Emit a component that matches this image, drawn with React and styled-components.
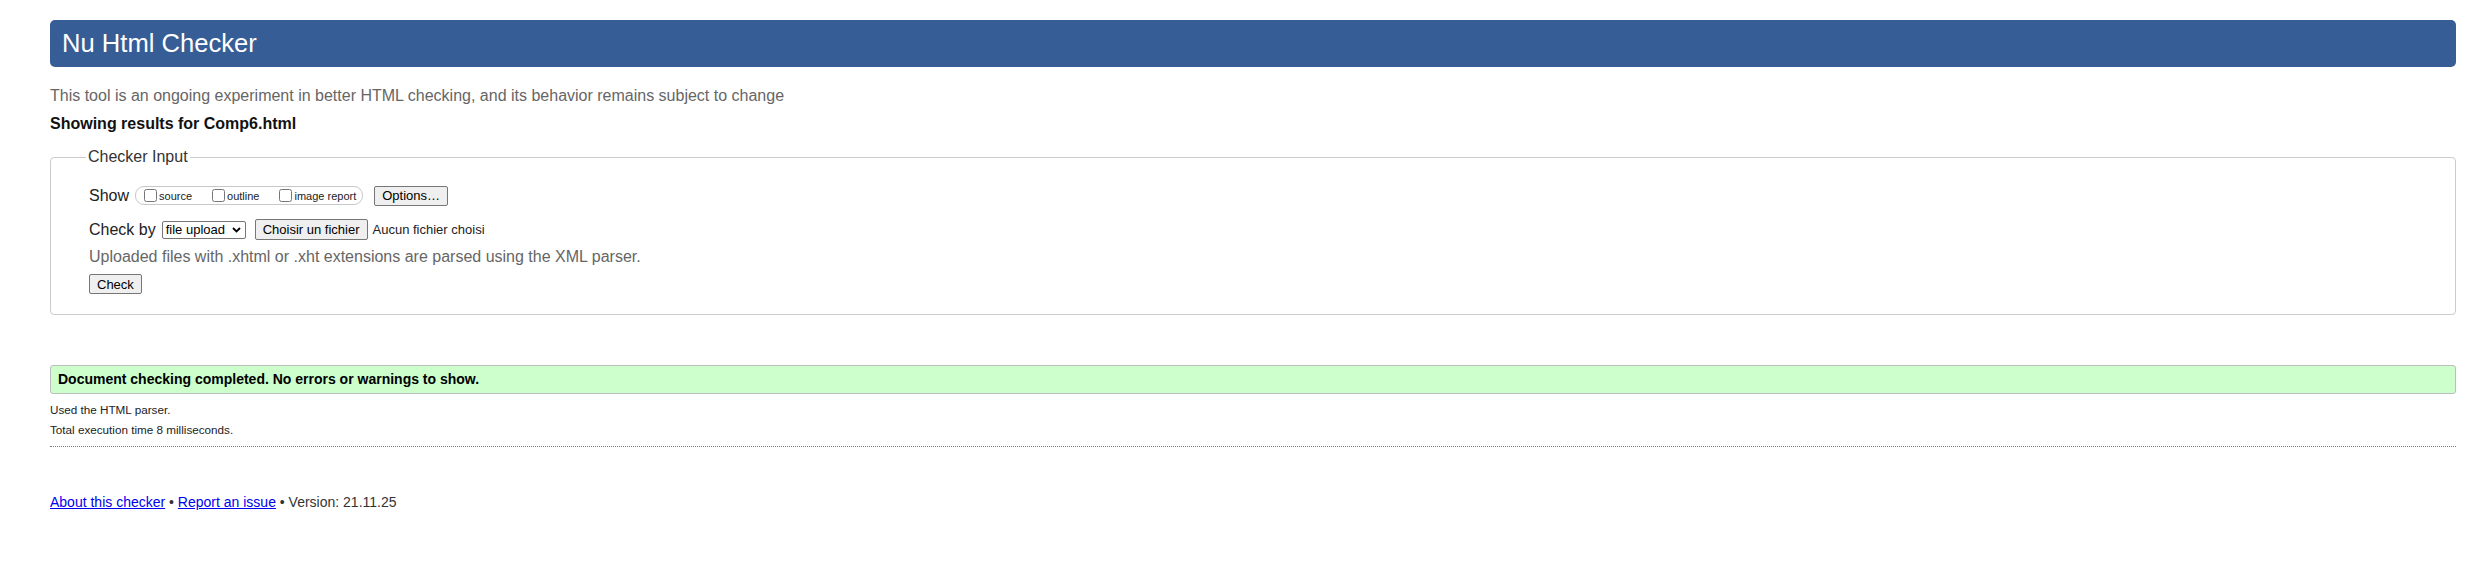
import styled, { createGlobalStyle } from "styled-components"

const GlobalStyle = createGlobalStyle`
  html, body {
    margin: 0;
    background: #fff;
  }
  body {
    padding: 20px 22px 0 50px;
    font-family: "Liberation Sans", Arial, sans-serif;
    color: #222;
  }
`

const Banner = styled.h1`
  margin: 0;
  height: 47px;
  line-height: 47px;
  padding: 0 12px;
  border-radius: 5px;
  background: #365d95;
  color: #fff;
  font-size: 25.6px;
  font-weight: normal;
`

const Intro = styled.p`
  margin: 19px 0 0;
  font-size: 16px;
  line-height: 19.2px;
  color: #666;
`

const ResultsFor = styled.p`
  margin: 9px 0 0;
  font-size: 16px;
  line-height: 19.2px;
  font-weight: bold;
  color: #111;
`

const InputFieldset = styled.fieldset`
  margin: 14px 0 0;
  padding: 19px 38px 20px 38px;
  border: 1px solid #cccccc;
  border-radius: 4px;
  min-width: 0;
`

const Legend = styled.legend`
  margin-left: -3px;
  padding: 0 2px;
  font-size: 16px;
  line-height: 19.2px;
  color: #333;
`

const FormRow = styled.div`
  display: flex;
  align-items: center;
  height: 20px;
  margin-top: ${props => props.$gap || 0}px;
`

const RowLabel = styled.span`
  font-size: 16px;
  color: #222;
`

const OptionGroup = styled.span`
  display: inline-flex;
  align-items: center;
  box-sizing: border-box;
  height: 19px;
  margin-left: 6px;
  padding: 0 6px 0 4px;
  border: 1px solid #c8c8c8;
  border-radius: 9px;
`

const OptionLabel = styled.label`
  display: inline-flex;
  align-items: center;
  font-size: 11px;
  color: #222;
  margin-right: 16px;
  &:last-child {
    margin-right: 0;
  }
`

const Checkbox = styled.input`
  width: 13px;
  height: 13px;
  margin: 0 2px 0 4px;
`

const Button = styled.button`
  box-sizing: border-box;
  height: ${props => props.$h || 20}px;
  margin-left: ${props => props.$ml || 0}px;
  padding: 0 7px;
  border: 1px solid #767676;
  border-radius: 2px;
  background: #efefef;
  color: #000;
  font-family: "Liberation Sans", Arial, sans-serif;
  font-size: 13px;
`

const SelectBox = styled.div`
  display: flex;
  align-items: center;
  justify-content: space-between;
  box-sizing: border-box;
  width: 84px;
  height: 18px;
  margin-left: 6px;
  padding: 0 4px 0 3px;
  border: 1px solid #767676;
  border-radius: 2px;
  font-size: 13px;
  color: #000;
`

const FileName = styled.span`
  margin-left: 5px;
  font-size: 13px;
  color: #222;
`

const Hint = styled.p`
  margin: 7.5px 0 0;
  font-size: 16px;
  line-height: 19.2px;
  color: #666;
`

const SuccessBox = styled.div`
  box-sizing: border-box;
  height: 29px;
  margin-top: 50px;
  padding: 0 7px;
  border: 1px solid #bdbdbd;
  border-radius: 3px;
  background: #ccffcc;
  font-size: 14px;
  line-height: 27px;
  font-weight: bold;
  color: #000;
`

const MetaList = styled.div`
  margin-top: 5.5px;
`

const Meta = styled.p`
  margin: 0;
  font-size: 11.7px;
  line-height: 20px;
  color: #222;
`

const Divider = styled.hr`
  margin: 6.5px 0 0;
  border: 0;
  border-top: 1px dotted #777;
  height: 0;
`

const Footer = styled.p`
  margin: 47px 0 0;
  font-size: 14px;
  line-height: 16.8px;
  color: #333;
`

const Link = styled.a`
  color: #0000ee;
  text-decoration: underline;
`

const Chevron = () => (
  <svg width="9" height="6" viewBox="0 0 9 6">
    <path d="M1 1 L4.5 4.5 L8 1" fill="none" stroke="#000" strokeWidth="1.8" />
  </svg>
)

const showOptions = ["source", "outline", "image report"]

const App = () => {
  return (<>
    <GlobalStyle />
    <Banner>Nu Html Checker</Banner>
    <Intro>This tool is an ongoing experiment in better HTML checking, and its behavior remains subject to change</Intro>
    <ResultsFor>Showing results for Comp6.html</ResultsFor>
    <InputFieldset>
      <Legend>Checker Input</Legend>
      <FormRow>
        <RowLabel>Show</RowLabel>
        <OptionGroup>
          {showOptions.map(name => (
            <OptionLabel key={name}>
              <Checkbox type="checkbox" />
              {name}
            </OptionLabel>
          ))}
        </OptionGroup>
        <Button $ml={11}>Options…</Button>
      </FormRow>
      <FormRow $gap={14}>
        <RowLabel>Check by</RowLabel>
        <SelectBox>
          <span>file upload</span>
          <Chevron />
        </SelectBox>
        <Button $h={21} $ml={9}>Choisir un fichier</Button>
        <FileName>Aucun fichier choisi</FileName>
      </FormRow>
      <Hint>Uploaded files with .xhtml or .xht extensions are parsed using the XML parser.</Hint>
      <FormRow $gap={8}>
        <Button>Check</Button>
      </FormRow>
    </InputFieldset>
    <SuccessBox>Document checking completed. No errors or warnings to show.</SuccessBox>
    <MetaList>
      <Meta>Used the HTML parser.</Meta>
      <Meta>Total execution time 8 milliseconds.</Meta>
    </MetaList>
    <Divider />
    <Footer>
      <Link href="#about">About this checker</Link> • <Link href="#report">Report an issue</Link> • Version: 21.11.25
    </Footer>
  </>)
}

export default App
